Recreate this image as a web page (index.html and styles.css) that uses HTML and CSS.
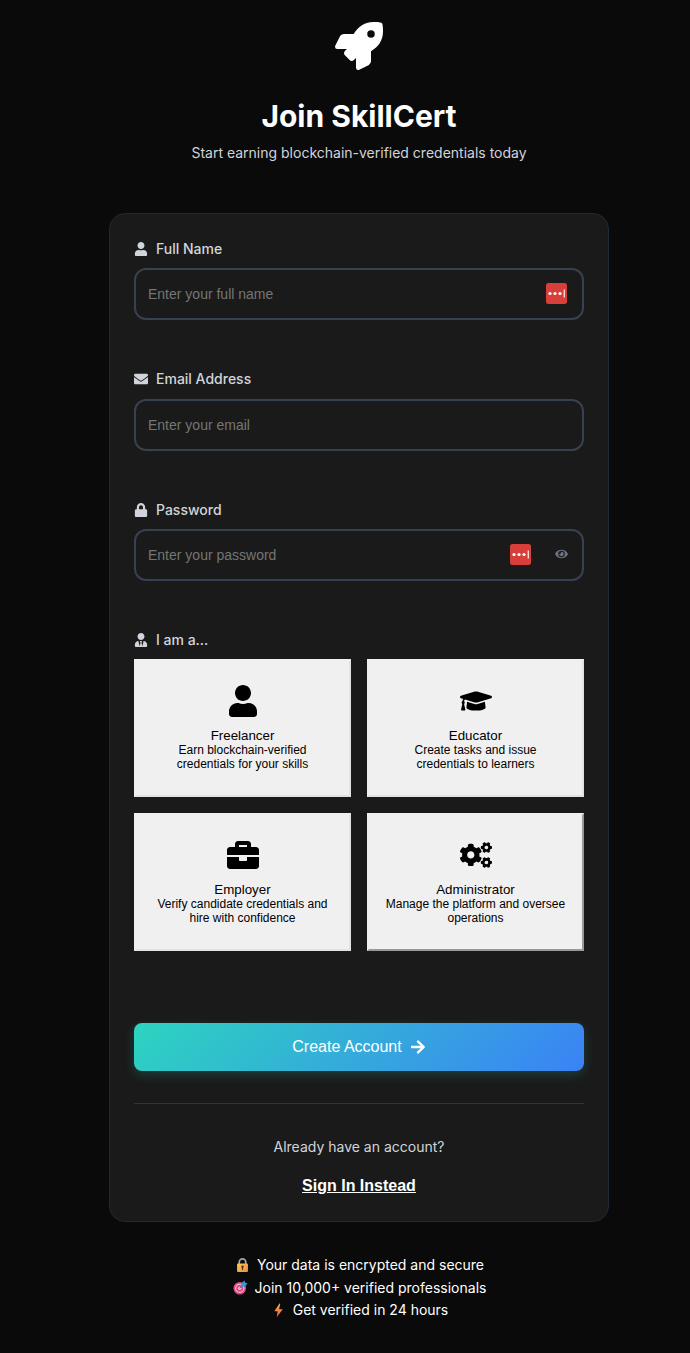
FILE: index.html
```html
<!DOCTYPE html>
<html lang="en">
<head>
<meta charset="utf-8">
<title>Join SkillCert</title>
<link rel="stylesheet" href="styles.css">
</head>
<body>
<main class="page">
  <header class="hero">
    <svg class="rocket" viewBox="0 0 512 512"><path d="M505.12 19.09c-1.19-5.53-6.66-11-12.21-12.19C460.72 0 435.51 0 410.41 0 307.18 0 245.27 55.2 199.05 128H94.84c-16.35.02-35.56 11.88-42.89 26.48L2.52 253.3A28.4 28.4 0 0 0 0 264a24 24 0 0 0 24 24h103.82l-22.48 22.47c-11.36 11.36-12.99 32.26 0 45.25l50.91 50.9c11.15 11.19 32.15 13.16 45.27 0L224 384.16V488a24 24 0 0 0 24 24 28.56 28.56 0 0 0 10.71-2.52l98.73-49.39c14.63-7.29 26.5-26.5 26.5-42.85V312.8c72.6-46.32 128.04-108.41 128.04-211.1.1-25.2.1-50.4-6.86-82.61zM384.04 168a40 40 0 1 1 40-40 40 40 0 0 1-40 40z"/></svg>
    <h1>Join SkillCert</h1>
    <p>Start earning blockchain-verified credentials today</p>
  </header>

  <form class="card">
    <div class="field">
      <label for="name"><svg viewBox="0 0 448 512"><path d="M224 256c70.7 0 128-57.3 128-128S294.7 0 224 0 96 57.3 96 128s57.3 128 128 128zm89.6 32h-16.7c-22.2 10.2-46.9 16-72.9 16s-50.6-5.8-72.9-16h-16.7C60.2 288 0 348.2 0 422.4V464c0 26.5 21.5 48 48 48h352c26.5 0 48-21.5 48-48v-41.6c0-74.2-60.2-134.4-134.4-134.4z"/></svg>Full Name</label>
      <div class="control">
        <input id="name" type="text" placeholder="Enter your full name">
        <svg class="vault" viewBox="0 0 21 21"><rect width="21" height="21" rx="2.5" fill="#d83f3a"/><g fill="#fff"><circle cx="4" cy="10.5" r="1.6"/><circle cx="9" cy="10.5" r="1.6"/><circle cx="14" cy="10.5" r="1.6"/><rect x="17.7" y="6.5" width="1.1" height="8"/></g></svg>
      </div>
    </div>
    <div class="field email-field">
      <label for="email"><svg viewBox="0 0 512 512"><path d="M502.3 190.8c3.9-3.1 9.7-.2 9.7 4.7V400c0 26.5-21.5 48-48 48H48c-26.5 0-48-21.5-48-48V195.6c0-5 5.7-7.8 9.7-4.7 22.4 17.4 52.1 39.5 154.1 113.6 21.1 15.4 56.7 47.8 92.2 47.6 35.7.3 72-32.8 92.3-47.6 102-74.1 131.6-96.3 154-113.7zM256 320c23.2.4 56.6-29.2 73.4-41.4 132.7-96.3 142.8-104.7 173.4-128.7 5.8-4.5 9.2-11.5 9.2-18.9v-19c0-26.5-21.5-48-48-48H48c-26.5 0-48 21.5-48 48v19c0 7.4 3.4 14.3 9.2 18.9 30.6 23.9 40.7 32.4 173.4 128.7 16.8 12.2 50.2 41.8 73.4 41.4z"/></svg>Email Address</label>
      <div class="control">
        <input id="email" type="email" placeholder="Enter your email">
      </div>
    </div>
    <div class="field">
      <label for="password"><svg viewBox="0 0 448 512"><path d="M400 224h-24v-72C376 68.2 307.8 0 224 0S72 68.2 72 152v72H48c-26.5 0-48 21.5-48 48v192c0 26.5 21.5 48 48 48h352c26.5 0 48-21.5 48-48V272c0-26.5-21.5-48-48-48zm-104 0H152v-72c0-39.7 32.3-72 72-72s72 32.3 72 72v72z"/></svg>Password</label>
      <div class="control">
        <input id="password" type="password" placeholder="Enter your password">
        <svg class="vault vault-inset" viewBox="0 0 21 21"><rect width="21" height="21" rx="2.5" fill="#d83f3a"/><g fill="#fff"><circle cx="4" cy="10.5" r="1.6"/><circle cx="9" cy="10.5" r="1.6"/><circle cx="14" cy="10.5" r="1.6"/><rect x="17.7" y="6.5" width="1.1" height="8"/></g></svg>
        <svg class="eye" viewBox="0 0 576 512"><path d="M572.52 241.4C518.29 135.59 410.93 64 288 64S57.68 135.64 3.48 241.41a32.35 32.35 0 0 0 0 29.19C57.71 376.41 165.07 448 288 448s230.32-71.64 284.52-177.41a32.35 32.35 0 0 0 0-29.19zM288 400a144 144 0 1 1 144-144 143.93 143.93 0 0 1-144 144zm0-240a95.31 95.31 0 0 0-25.31 3.79 47.85 47.85 0 0 1-66.9 66.9A95.78 95.78 0 1 0 288 160z"/></svg>
      </div>
    </div>
    <div class="field roles-field">
      <label><svg viewBox="0 0 448 512"><path d="M224 256c70.7 0 128-57.3 128-128S294.7 0 224 0 96 57.3 96 128s57.3 128 128 128zm95.8 32.6L272 480l-32-136 32-56h-96l32 56-32 136-47.8-191.4C56.9 292 0 350.3 0 422.4V464c0 26.5 21.5 48 48 48h352c26.5 0 48-21.5 48-48v-41.6c0-72.1-56.9-130.4-128.2-133.8z"/></svg>I am a...</label>
      <div class="roles">
        <button type="button" class="role">
          <svg viewBox="0 0 448 512"><path d="M224 256c70.7 0 128-57.3 128-128S294.7 0 224 0 96 57.3 96 128s57.3 128 128 128zm89.6 32h-16.7c-22.2 10.2-46.9 16-72.9 16s-50.6-5.8-72.9-16h-16.7C60.2 288 0 348.2 0 422.4V464c0 26.5 21.5 48 48 48h352c26.5 0 48-21.5 48-48v-41.6c0-74.2-60.2-134.4-134.4-134.4z"/></svg>
          <span class="role-name">Freelancer</span>
          <span class="role-text">Earn blockchain-verified<br>credentials for your skills</span>
        </button>
        <button type="button" class="role">
          <svg viewBox="0 0 640 512"><path d="M622.34 153.2L343.4 67.5c-15.2-4.67-31.6-4.67-46.79 0L17.66 153.2c-23.54 7.23-23.54 38.36 0 45.59l48.63 14.94c-10.67 13.19-17.23 29.28-17.88 46.9C38.78 266.15 32 276.11 32 288c0 10.78 5.68 19.85 13.86 25.65L20.33 428.53C18.11 438.52 25.71 448 35.94 448h56.11c10.24 0 17.84-9.48 15.62-19.47L82.14 313.65C90.32 307.85 96 298.78 96 288c0-11.57-6.47-21.25-15.66-26.87.76-15.02 8.44-28.3 20.69-36.72L296.6 284.5c9.06 2.78 26.44 6.25 46.79 0l278.95-85.7c23.55-7.24 23.55-38.36 0-45.6zM352.79 315.09c-28.53 8.76-52.84 3.92-65.59 0l-145.02-44.55L128 384c0 35.35 85.96 64 192 64s192-28.65 192-64l-14.18-113.47-145.03 44.56z"/></svg>
          <span class="role-name">Educator</span>
          <span class="role-text">Create tasks and issue<br>credentials to learners</span>
        </button>
        <button type="button" class="role">
          <svg viewBox="0 0 512 512"><path d="M320 336c0 8.84-7.16 16-16 16h-96c-8.84 0-16-7.16-16-16v-48H0v144c0 25.6 22.4 48 48 48h416c25.6 0 48-22.4 48-48V288H320v48zm144-208h-80V80c0-25.6-22.4-48-48-48H176c-25.6 0-48 22.4-48 48v48H48c-25.6 0-48 22.4-48 48v80h512v-80c0-25.6-22.4-48-48-48zm-144 0H192V96h128v32z"/></svg>
          <span class="role-name">Employer</span>
          <span class="role-text">Verify candidate credentials and<br>hire with confidence</span>
        </button>
        <button type="button" class="role role-outset">
          <svg viewBox="0 0 640 512"><defs><path id="small-gear" d="M512.1 191l-8.2 14.3c-3 5.3-9.4 7.5-15.1 5.4-11.8-4.4-22.6-10.7-32.1-18.6-4.6-3.8-5.8-10.5-2.8-15.7l8.2-14.3c-6.9-8-12.3-17.3-15.9-27.4h-16.5c-6 0-11.2-4.3-12.2-10.3-2-12-2.1-24.6 0-37.1 1-6 6.2-10.4 12.2-10.4h16.5c3.6-10.1 9-19.4 15.9-27.4l-8.2-14.3c-3-5.2-1.9-11.9 2.8-15.7 9.5-7.9 20.4-14.2 32.1-18.6 5.7-2.1 12.1.1 15.1 5.4l8.2 14.3c10.5-1.9 21.2-1.9 31.7 0L552 6.3c3-5.3 9.4-7.5 15.1-5.4 11.8 4.4 22.6 10.7 32.1 18.6 4.6 3.8 5.8 10.5 2.8 15.7l-8.2 14.3c6.9 8 12.3 17.3 15.9 27.4h16.5c6 0 11.2 4.3 12.2 10.3 2 12 2.1 24.6 0 37.1-1 6-6.2 10.4-12.2 10.4h-16.5c-3.6 10.1-9 19.4-15.9 27.4l8.2 14.3c3 5.2 1.9 11.9-2.8 15.7-9.5 7.9-20.4 14.2-32.1 18.6-5.7 2.1-12.1-.1-15.1-5.4l-8.2-14.3c-10.4 1.9-21.2 1.9-31.7 0zm-10.5-58.8c38.5 29.6 82.4-14.3 52.8-52.8-38.5-29.7-82.4 14.3-52.8 52.8z"/></defs><use href="#small-gear"/><use href="#small-gear" transform="translate(0 299)"/><path d="M386.3 286.1l33.7 16.8c10.1 5.8 14.5 18.1 10.5 29.1-8.9 24.2-26.4 46.4-42.6 65.8-7.4 8.9-20.2 11.1-30.3 5.3l-29.1-16.8c-16 13.7-34.6 24.6-54.9 31.7v33.6c0 11.6-8.3 21.6-19.7 23.6-24.6 4.2-50.4 4.4-75.9 0-11.5-2-20-11.9-20-23.6V418c-20.3-7.2-38.9-18-54.9-31.7L74 403c-10 5.8-22.9 3.6-30.3-5.3-16.2-19.4-33.3-41.6-42.2-65.7-4-10.9.4-23.2 10.5-29.1l33.3-16.8c-3.9-20.9-3.9-42.4 0-63.4L12 205.8c-10.1-5.8-14.6-18.1-10.5-29 8.9-24.2 26-46.4 42.2-65.8 7.4-8.9 20.2-11.1 30.3-5.3l29.1 16.8c16-13.7 34.6-24.6 54.9-31.7V57.1c0-11.5 8.2-21.5 19.6-23.5 24.6-4.2 50.5-4.4 76-.1 11.5 2 20 11.9 20 23.6v33.6c20.3 7.2 38.9 18 54.9 31.7l29.1-16.8c10-5.8 22.9-3.6 30.3 5.3 16.2 19.4 33.2 41.6 42.1 65.8 4 10.9.1 23.2-10 29.1l-33.7 16.8c3.9 21 3.9 42.5 0 63.5zm-117.6 21.1c59.2-77-28.7-164.9-105.7-105.7-59.2 77 28.7 164.9 105.7 105.7z"/></svg>
          <span class="role-name">Administrator</span>
          <span class="role-text">Manage the platform and oversee<br>operations</span>
        </button>
      </div>
    </div>
    <button type="button" class="submit">Create Account<svg viewBox="0 0 448 512"><path d="M190.5 66.9l22.2-22.2c9.4-9.4 24.6-9.4 33.9 0L441 239c9.4 9.4 9.4 24.6 0 33.9L246.6 467.3c-9.4 9.4-24.6 9.4-33.9 0l-22.2-22.2c-9.5-9.5-9.3-25 .4-34.3L311.4 296H24c-13.3 0-24-10.7-24-24v-32c0-13.3 10.7-24 24-24h287.4L190.9 101.2c-9.8-9.3-10-24.8-.4-34.3z"/></svg></button>
    <div class="signin">
      <p>Already have an account?</p>
      <a href="#">Sign In Instead</a>
    </div>
  </form>

  <footer class="perks">
    <p><svg viewBox="0 0 16 16"><defs><linearGradient id="gold" x1="0" y1="0" x2="1" y2="1"><stop offset="0" stop-color="#ffc94d"/><stop offset="1" stop-color="#ed8b45"/></linearGradient></defs><path d="M4.5 7V4.5a3.5 3.5 0 0 1 7 0V7" fill="none" stroke="#aaa3b2" stroke-width="1.8"/><rect x="2.2" y="5.8" width="11.6" height="9.2" rx="1.2" fill="url(#gold)"/><circle cx="8" cy="9.3" r="1.3" fill="#493338"/><path d="M7.4 9.5h1.2v3.4H7.4z" fill="#493338"/></svg>Your data is encrypted and secure</p>
    <p><svg viewBox="0 0 16 16"><circle cx="7.2" cy="8.8" r="6.7" fill="#e34483"/><circle cx="7.2" cy="8.8" r="4.9" fill="#f2c9dc"/><circle cx="7.2" cy="8.8" r="3.8" fill="#df3f7e"/><circle cx="7.2" cy="8.8" r="1.9" fill="#f2c9dc"/><path d="M7 9l5-5" stroke="#586887" stroke-width="1.1"/><path d="M8.8 7.2V3.8L12.2.4l.9 2.5 2.5.9-3.4 3.4z" fill="#3299e0"/></svg>Join 10,000+ verified professionals</p>
    <p><svg viewBox="0 0 16 16"><defs><linearGradient id="bolt" x1="0" y1="0" x2="0" y2="1"><stop offset="0" stop-color="#ffb052"/><stop offset="1" stop-color="#ee5b38"/></linearGradient></defs><path d="M8.9.8 3.5 8.7h3.6l-1 6.5 6.4-8.5H8.6L9.8 1c.1-.5-.5-.7-.9-.2z" fill="url(#bolt)"/></svg>Get verified in 24 hours</p>
  </footer>
</main>
</body>
</html>
```
FILE: styles.css
```css
* { box-sizing: border-box; }

body {
  margin: 0;
  background: #0a0a0a;
  color: #fff;
  font-family: Inter, sans-serif;
}

svg { fill: currentColor; flex: none; }
h1, p { margin: 0; }

.page {
  width: 500px;
  margin-left: 109px;
  padding-top: 22px;
}

.hero {
  display: flex;
  flex-direction: column;
  align-items: center;
  height: 191px;
}

.rocket { width: 48px; height: 48px; }

.hero h1 {
  margin-top: 27px;
  font-size: 30px;
  font-weight: 700;
  line-height: 38px;
}

.hero p {
  margin-top: 7px;
  color: #d1d5db;
  font-size: 14px;
  line-height: 22px;
}

.card {
  height: 1009px;
  padding: 24px;
  background: #1a1a1a;
  border: 1px solid #1f2937;
  border-radius: 16px;
}

.field { height: 130px; }

.field label {
  display: flex;
  align-items: center;
  gap: 8px;
  height: 21px;
  margin-bottom: 9px;
  color: #d1d5db;
  font-size: 14px;
  font-weight: 500;
}

.field label svg { width: 14px; height: 14px; }

.email-field { height: 131px; }
.email-field label { margin-bottom: 10px; }

.control { position: relative; }

.control input {
  display: block;
  width: 100%;
  height: 52px;
  padding: 0 12px;
  background: #1a1a1a;
  border: 2px solid #374151;
  border-radius: 12px;
  color: #fff;
  font: 14px "Liberation Sans", Arial, sans-serif;
}

.control input::placeholder { color: #757575; }

.vault {
  position: absolute;
  top: 15px;
  right: 17px;
  width: 21px;
  height: 21px;
}

.vault-inset { right: 53px; }

.eye {
  position: absolute;
  top: 18.5px;
  right: 16px;
  width: 13px;
  height: 12px;
  color: #6b7280;
}

.roles-field { height: 394px; }

.roles {
  display: grid;
  grid-template-columns: 1fr 1fr;
  grid-auto-rows: 138px;
  gap: 16px;
}

.role {
  display: flex;
  flex-direction: column;
  align-items: center;
  justify-content: flex-start;
  padding: 24px 0 0;
  background: #f0f0f0;
  border: 2px solid;
  border-color: #f0f0f0 #e2e2e2 #e2e2e2 #f0f0f0;
  color: #000;
  font-family: "Liberation Sans", Arial, sans-serif;
}

.role-outset { border-color: #f0f0f0 #999 #999 #f0f0f0; }
.role svg { height: 32px; width: 32px; margin-bottom: 11px; }
.role-name { font-size: 13.33px; line-height: 15px; }
.role-text { font-size: 12px; line-height: 14px; white-space: nowrap; }

.submit {
  display: flex;
  align-items: center;
  justify-content: center;
  gap: 8px;
  width: 100%;
  height: 48px;
  padding: 0;
  border: 0;
  border-radius: 8px;
  background: linear-gradient(135deg, #2dd4bf, #3b82f6);
  box-shadow: 0 4px 12px rgba(45, 212, 191, 0.2);
  color: #fff;
  font: 16px "Liberation Sans", Arial, sans-serif;
}

.submit svg { width: 16px; height: 16px; }

.signin {
  display: flex;
  flex-direction: column;
  align-items: center;
  margin-top: 32px;
  padding-top: 32px;
  border-top: 1px solid #333;
}

.signin p { color: #d1d5db; font-size: 14px; line-height: 22px; }

.signin a {
  margin-top: 18px;
  color: #fff;
  font: bold 16px/19px "Liberation Sans", Arial, sans-serif;
}

.perks {
  padding: 32.2px 0 0 1px;
  font-size: 14px;
  line-height: 22.4px;
}

.perks p {
  display: flex;
  align-items: center;
  justify-content: center;
  gap: 7px;
}

.perks svg { width: 15px; height: 15px; }
```
